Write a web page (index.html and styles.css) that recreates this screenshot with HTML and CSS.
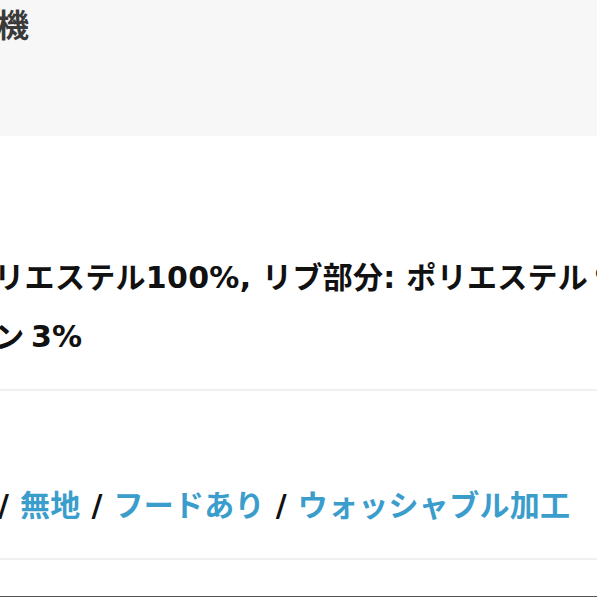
FILE: index.html
```html
<!DOCTYPE html>
<html lang="ja">
<head>
<meta charset="utf-8">
<title>商品詳細</title>
<link rel="stylesheet" href="styles.css">
</head>
<body>
  <section class="header">
    <h2 class="title">機</h2>
  </section>
  <section class="spec">
    <div class="spec-text">
      <p class="line">ポリエステル100%, リブ部分: ポリエステル&#8201;97%, ポリウ</p>
      <p class="line">タン&#8201;3%</p>
    </div>
  </section>
  <section class="tags">
    <p class="tag-line"><span class="sep">/</span> <a class="tag" href="#">無地</a> <span class="sep">/</span> <a class="tag" href="#">フードあり</a> <span class="sep">/</span> <a class="tag" href="#">ウォッシャブル加工</a></p>
  </section>
  <div class="spacer"></div>
  <div class="bottom-bar"></div>
</body>
</html>
```
FILE: styles.css
```css
html, body {
  margin: 0;
  padding: 0;
}
body {
  width: 597px;
  height: 597px;
  overflow: hidden;
  background: #ffffff;
  font-family: "DejaVu Sans", "Noto Sans CJK JP", sans-serif;
  display: flex;
  flex-direction: column;
}
.header {
  background: #f7f7f7;
  height: 136px;
  flex: none;
}
.title {
  margin: 0 0 0 -3px;
  font-family: "Noto Sans CJK JP", sans-serif;
  font-size: 32px;
  line-height: 46px;
  font-weight: 700;
  color: #3a3a3a;
}
.spec {
  box-sizing: border-box;
  height: 255px;
  flex: none;
  padding-top: 112px;
  border-bottom: 2px solid #f0f0f0;
  overflow: hidden;
}
.spec-text {
  margin-left: -36px;
}
.line {
  margin: 0;
  white-space: nowrap;
  font-size: 30px;
  letter-spacing: 0.3px;
  line-height: 59px;
  font-weight: 700;
  color: #111111;
}
.tags {
  box-sizing: border-box;
  height: 169px;
  flex: none;
  padding-top: 95px;
  border-bottom: 2px solid #f0f0f0;
  overflow: hidden;
}
.tag-line {
  margin: 0 0 0 -2px;
  white-space: nowrap;
  font-size: 30px;
  letter-spacing: 0.3px;
  line-height: 40px;
  font-weight: 700;
  color: #111111;
}
.tag {
  color: #3a9dcc;
  text-decoration: none;
}
.spacer {
  flex: 1;
}
.bottom-bar {
  height: 1px;
  flex: none;
  background: #555555;
}
```
